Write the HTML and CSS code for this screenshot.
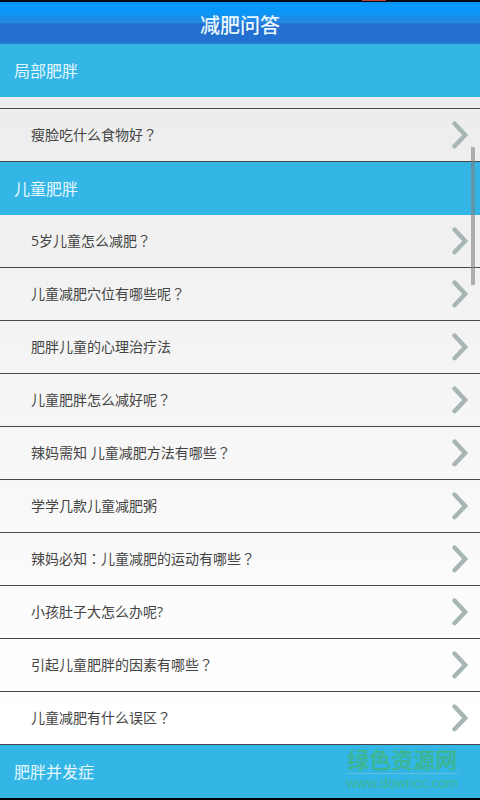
FILE: index.html
```html
<!DOCTYPE html>
<html lang="zh-CN">
<head>
  <meta charset="UTF-8">
  <meta name="viewport" content="width=device-width, initial-scale=1">
  <title>减肥问答</title>
  <link rel="stylesheet" href="styles.css">
</head>

<body>
  <!-- shared arrow icon -->
  <svg class="sprite" aria-hidden="true">
    <symbol id="arrow" viewBox="0 0 16 28">
      <path d="M2.5 2.5 L13.2 14 L2.5 25.2" fill="none" stroke="#a7b5b4" stroke-width="4.4" stroke-linecap="round" stroke-linejoin="miter"/>
    </symbol>
  </svg>

  <div class="status-bar"><span class="status-mark"></span></div>

  <header class="title-bar">
    <h1>减肥问答</h1>
  </header>

  <main class="list">
    <h2 class="group">局部肥胖</h2>
    <div class="row-clipped"></div>
    <ul>
      <li><a class="row" href="#"><span>瘦脸吃什么食物好<span class="mark" lang="zh-TW">？</span></span><svg class="arrow"><use href="#arrow"/></svg></a></li>
    </ul>

    <h2 class="group">儿童肥胖</h2>
    <ul>
      <li><a class="row" href="#"><span>5岁儿童怎么减肥<span class="mark" lang="zh-TW">？</span></span><svg class="arrow"><use href="#arrow"/></svg></a></li>
      <li><a class="row" href="#"><span>儿童减肥穴位有哪些呢<span class="mark" lang="zh-TW">？</span></span><svg class="arrow"><use href="#arrow"/></svg></a></li>
      <li><a class="row" href="#"><span>肥胖儿童的心理治疗法</span><svg class="arrow"><use href="#arrow"/></svg></a></li>
      <li><a class="row" href="#"><span>儿童肥胖怎么减好呢<span class="mark" lang="zh-TW">？</span></span><svg class="arrow"><use href="#arrow"/></svg></a></li>
      <li><a class="row" href="#"><span>辣妈需知 儿童减肥方法有哪些<span class="mark" lang="zh-TW">？</span></span><svg class="arrow"><use href="#arrow"/></svg></a></li>
      <li><a class="row" href="#"><span>学学几款儿童减肥粥</span><svg class="arrow"><use href="#arrow"/></svg></a></li>
      <li><a class="row" href="#"><span>辣妈必知<span class="mark" lang="zh-TW">：</span>儿童减肥的运动有哪些<span class="mark" lang="zh-TW">？</span></span><svg class="arrow"><use href="#arrow"/></svg></a></li>
      <li><a class="row" href="#"><span>小孩肚子大怎么办呢?</span><svg class="arrow"><use href="#arrow"/></svg></a></li>
      <li><a class="row" href="#"><span>引起儿童肥胖的因素有哪些<span class="mark" lang="zh-TW">？</span></span><svg class="arrow"><use href="#arrow"/></svg></a></li>
      <li><a class="row" href="#"><span>儿童减肥有什么误区<span class="mark" lang="zh-TW">？</span></span><svg class="arrow"><use href="#arrow"/></svg></a></li>
    </ul>

    <h2 class="group">肥胖并发症</h2>

    <div class="scroll-thumb"></div>
    <div class="watermark">
      <div class="watermark-name">绿色资源网</div>
      <div class="watermark-url">www.downcc.com</div>
    </div>
  </main>
</body>
</html>
```

FILE: styles.css
```css
:root {
  --group-color: #33b5e5;
  --line-color: #48484a;
  --text-color: #444;
}
* {
  box-sizing: border-box;
}
body {
  margin: 0;
  padding-bottom: 2px;
  background: #000;
  color: var(--text-color);
  font-family: "Open Sans", "Noto Sans CJK SC", sans-serif;
}
h1, h2, ul {
  margin: 0;
  padding: 0;
  font-weight: 400;
}
ul {
  list-style: none;
}
.sprite {
  display: none;
}
.status-bar {
  display: flex;
  justify-content: flex-end;
  height: 2px;
  padding-right: 94px;
  background: #06090f;
}
.status-mark {
  width: 24px;
  height: 1px;
  background: #b8423a;
}
.title-bar {
  height: 42px;
  padding-top: 2px;
  background: linear-gradient(#0a8ff0 0, #0698fa 3px, #0896f8 10px, #2a86de 21px, #2470d0 22px, #2470d0 39px, #2a7fd4 42px);
  color: #e9f8ff;
  text-align: center;
}
.title-bar h1 {
  font-size: 20px;
  font-weight: 500;
  line-height: 44px;
}
.list {
  position: relative;
  background: linear-gradient(#ebebeb, #fff 90%);
}
.group {
  padding: 2px 14px 0;
  background: var(--group-color);
  color: #e4f8ff;
  font-size: 16px;
  line-height: 51px;
}
.row-clipped {
  height: 12px;
  border-bottom: 1px solid var(--line-color);
}
.row {
  display: flex;
  align-items: center;
  justify-content: space-between;
  height: 53px;
  padding: 0 12px 0 31px;
  border-bottom: 1px solid var(--line-color);
  color: var(--text-color);
  font-size: 14px;
  line-height: 20px;
  text-decoration: none;
}
/* centred full-width punctuation */
.mark {
  font-family: "Noto Sans CJK TC", sans-serif;
  line-height: 1;
}
.arrow {
  width: 16px;
  height: 28px;
}
.scroll-thumb {
  position: absolute;
  top: 103px;
  right: 5px;
  width: 4px;
  height: 138px;
  border-radius: 1px;
  background: rgba(128, 128, 128, 0.6);
}
.watermark {
  position: absolute;
  right: 22px;
  bottom: 6px;
  color: #3cb595;
  text-align: center;
}
.watermark-name {
  border-bottom: 1px solid #62bfe2;
  font-size: 22px;
  font-weight: 700;
  line-height: 28px;
}
.watermark-url {
  font-family: "Liberation Sans", sans-serif;
  font-size: 14px;
  line-height: 18px;
}
```
